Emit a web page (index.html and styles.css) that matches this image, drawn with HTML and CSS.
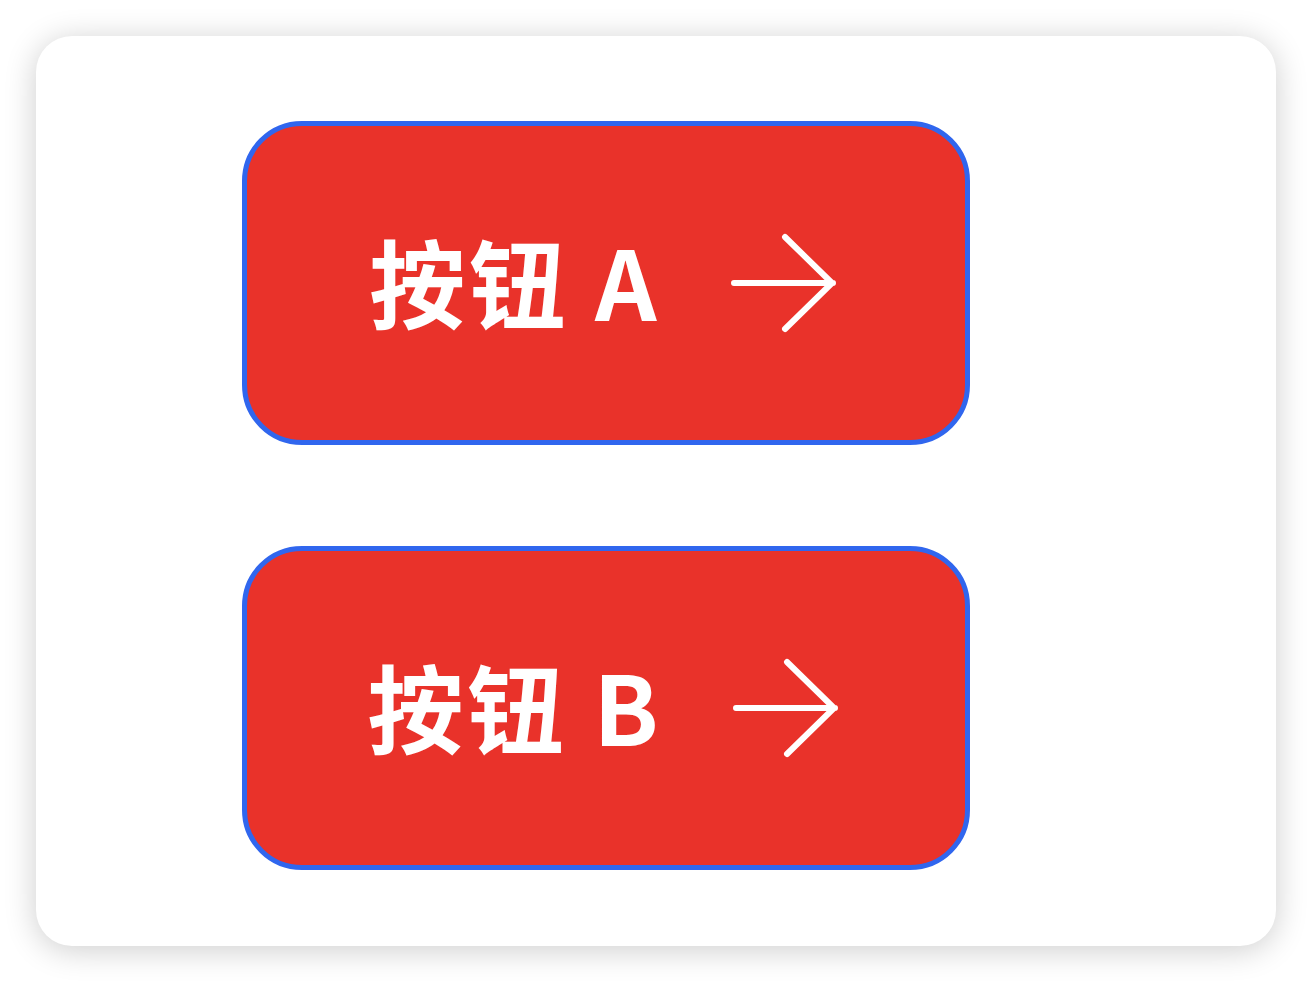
FILE: index.html
```html
<!DOCTYPE html>
<html lang="zh-CN">
<head>
    <meta charset="UTF-8">
    <meta name="viewport" content="width=device-width, initial-scale=1.0">
    <title>按钮</title>
    <link rel="stylesheet" href="styles.css">
</head>
<body>
    <!-- 卡片 -->
    <div class="card">
        <button class="btn" type="button">
            <span class="btn-label">按钮 A</span>
            <svg class="btn-arrow" viewBox="0 0 106 100" width="106" height="100">
                <path d="M3 50 H102 M54 4 L101 50 L54 96" />
            </svg>
        </button>
        <button class="btn" type="button">
            <span class="btn-label">按钮 B</span>
            <svg class="btn-arrow" viewBox="0 0 106 100" width="106" height="100">
                <path d="M3 50 H102 M54 4 L101 50 L54 96" />
            </svg>
        </button>
    </div>
</body>
</html>
```

FILE: styles.css
```css
* {
    margin: 0;
    padding: 0;
    box-sizing: border-box;
}

body, html {
    font-family: "Noto Sans CJK SC", "Noto Sans", sans-serif;
    background-color: #ffffff;
}

body {
    padding: 36px;
}

.card {
    height: 910px;
    background-color: #ffffff;
    border-radius: 36px;
    box-shadow: 0 4px 32px rgba(0, 0, 0, 0.2);
    padding: 85px 0 0 206px;
    display: flex;
    flex-direction: column;
    gap: 101px;
}

.btn {
    width: 728px;
    height: 324px;
    padding-right: 6px;
    background-color: #e9322a;
    border: 5px solid #3066ee;
    border-radius: 60px;
    color: #ffffff;
    display: flex;
    align-items: center;
    justify-content: center;
    gap: 70px;
    font-family: inherit;
    cursor: pointer;
}

.btn-label {
    font-size: 96px;
    font-weight: 700;
    line-height: 1;
    letter-spacing: 4px;
    padding-bottom: 6px;
}

.btn-arrow {
    fill: none;
    stroke: #ffffff;
    stroke-width: 6;
    stroke-linecap: round;
    stroke-linejoin: round;
}
```
